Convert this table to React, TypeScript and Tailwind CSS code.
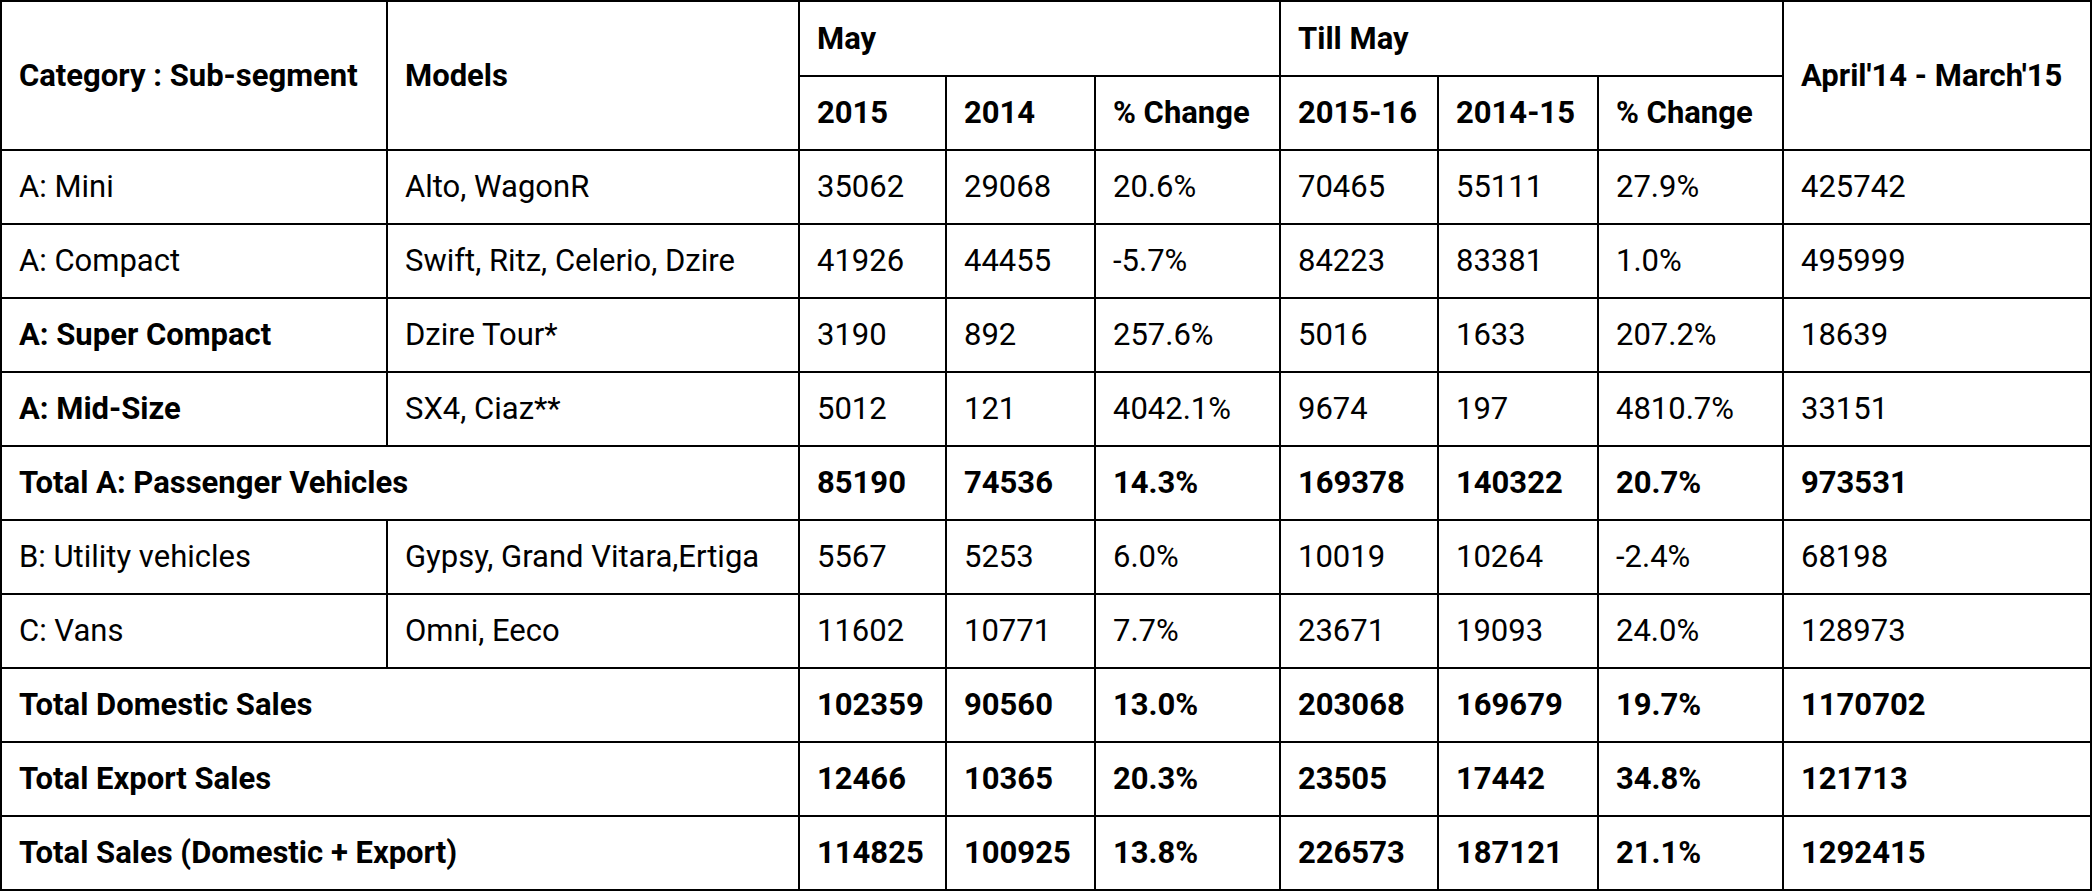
import React from "react";

type Row = {
  cat: string;
  models?: string;
  catBold?: boolean;
  total?: boolean;
  vals: string[];
};

const rows: Row[] = [
  { cat: "A: Mini", models: "Alto, WagonR", vals: ["35062", "29068", "20.6%", "70465", "55111", "27.9%", "425742"] },
  { cat: "A: Compact", models: "Swift, Ritz, Celerio, Dzire", vals: ["41926", "44455", "-5.7%", "84223", "83381", "1.0%", "495999"] },
  { cat: "A: Super Compact", models: "Dzire Tour*", catBold: true, vals: ["3190", "892", "257.6%", "5016", "1633", "207.2%", "18639"] },
  { cat: "A: Mid-Size", models: "SX4, Ciaz**", catBold: true, vals: ["5012", "121", "4042.1%", "9674", "197", "4810.7%", "33151"] },
  { cat: "Total A: Passenger Vehicles", total: true, vals: ["85190", "74536", "14.3%", "169378", "140322", "20.7%", "973531"] },
  { cat: "B: Utility vehicles", models: "Gypsy, Grand Vitara,Ertiga", vals: ["5567", "5253", "6.0%", "10019", "10264", "-2.4%", "68198"] },
  { cat: "C: Vans", models: "Omni, Eeco", vals: ["11602", "10771", "7.7%", "23671", "19093", "24.0%", "128973"] },
  { cat: "Total Domestic Sales", total: true, vals: ["102359", "90560", "13.0%", "203068", "169679", "19.7%", "1170702"] },
  { cat: "Total Export Sales", total: true, vals: ["12466", "10365", "20.3%", "23505", "17442", "34.8%", "121713"] },
  { cat: "Total Sales (Domestic + Export)", total: true, vals: ["114825", "100925", "13.8%", "226573", "187121", "21.1%", "1292415"] },
];

const cell = "border-2 border-black pl-[17px] pr-[8px] py-0 text-left align-middle whitespace-nowrap";

export default function App() {
  return (
    <div className="bg-white min-h-screen text-black" style={{ fontFamily: "Roboto, 'Liberation Sans', sans-serif" }}>
      <table className="border-collapse table-fixed w-[2092px] text-[31px] leading-[36px]">
        <colgroup>
          <col className="w-[386px]" />
          <col className="w-[412px]" />
          <col className="w-[147px]" />
          <col className="w-[149px]" />
          <col className="w-[185px]" />
          <col className="w-[158px]" />
          <col className="w-[160px]" />
          <col className="w-[185px]" />
          <col className="w-[308px]" />
        </colgroup>
        <thead>
          <tr className="h-[75px]">
            <th rowSpan={2} className={`${cell} font-bold`}>Category : Sub-segment</th>
            <th rowSpan={2} className={`${cell} font-bold`}>Models</th>
            <th colSpan={3} className={`${cell} font-bold`}>May</th>
            <th colSpan={3} className={`${cell} font-bold`}>Till May</th>
            <th rowSpan={2} className={`${cell} font-bold`}>April'14 - March'15</th>
          </tr>
          <tr className="h-[74px]">
            <th className={`${cell} font-bold`}>2015</th>
            <th className={`${cell} font-bold`}>2014</th>
            <th className={`${cell} font-bold`}>% Change</th>
            <th className={`${cell} font-bold`}>2015-16</th>
            <th className={`${cell} font-bold`}>2014-15</th>
            <th className={`${cell} font-bold`}>% Change</th>
          </tr>
        </thead>
        <tbody>
          {rows.map((r, i) => (
            <tr key={i} className="h-[74px]">
              {r.total ? (
                <td colSpan={2} className={`${cell} font-bold`}>{r.cat}</td>
              ) : (
                <>
                  <td className={`${cell} ${r.catBold ? "font-bold" : "font-normal"}`}>{r.cat}</td>
                  <td className={`${cell} font-normal`}>{r.models}</td>
                </>
              )}
              {r.vals.map((v, j) => (
                <td key={j} className={`${cell} ${r.total ? "font-bold" : "font-normal"}`}>{v}</td>
              ))}
            </tr>
          ))}
        </tbody>
      </table>
    </div>
  );
}
